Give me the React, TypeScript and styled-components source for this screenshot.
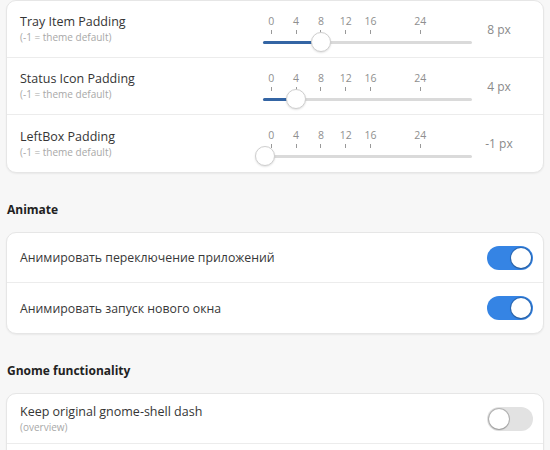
import styled, { createGlobalStyle } from "styled-components";

const GlobalStyle = createGlobalStyle`
  html, body {
    margin: 0;
    padding: 0;
    background: #f7f7f7;
    font-family: "Open Sans", "Noto Sans", sans-serif;
    color: #333;
  }
`;

const Page = styled.div({
  display: "flex",
  flexDirection: "column",
  padding: "0 6px",
  width: 538,
});

const Card = styled.div({
  display: "flex",
  flexDirection: "column",
  background: "#fff",
  border: "1px solid #e6e6e6",
  borderRadius: 10,
  boxShadow: "0 1px 2px rgba(0,0,0,0.06)",
  overflow: "hidden",
});

const Row = styled.div<{ $h: number }>(({ $h }) => ({
  display: "flex",
  alignItems: "center",
  height: $h,
  padding: "0 10px 0 13px",
  borderBottom: "1px solid #ececec",
  boxSizing: "border-box",
  "&:last-child": { borderBottom: "none" },
}));

const Labels = styled.div({
  display: "flex",
  flexDirection: "column",
  flex: 1,
  gap: 1,
  marginTop: -2,
});

const Title = styled.div({
  fontSize: 12.5,
  fontWeight: 500,
  color: "#353535",
  lineHeight: "17px",
});

const Subtitle = styled.div({
  fontSize: 10,
  color: "#a8a8a8",
  lineHeight: "12px",
});

const Label = styled.div({
  flex: 1,
  fontSize: 12.3,
  color: "#383838",
});

const Heading = styled.div({
  fontSize: 12,
  fontWeight: 700,
  color: "#222",
  lineHeight: "16px",
  padding: "29px 1px 14px",
});

const SliderBox = styled.div({
  position: "relative",
  width: 209,
  height: 57,
  alignSelf: "flex-start",
});

const Track = styled.div({
  position: "absolute",
  left: 0,
  right: 0,
  top: 40,
  height: 3,
  borderRadius: 2,
  background: "#dadada",
});

const Fill = styled.div({
  position: "absolute",
  left: 0,
  top: 40,
  height: 3,
  borderRadius: 2,
  background: "#3465a4",
});

const Thumb = styled.div({
  position: "absolute",
  top: 31,
  width: 20,
  height: 20,
  marginLeft: -10,
  borderRadius: "50%",
  background: "#fff",
  border: "1px solid #cfcfcf",
  boxSizing: "border-box",
  boxShadow: "0 1px 2px rgba(0,0,0,0.12)",
});

const Mark = styled.div({
  position: "absolute",
  top: 14,
  width: 20,
  marginLeft: -10,
  display: "flex",
  flexDirection: "column",
  alignItems: "center",
  fontSize: 10.5,
  color: "#8f8f8f",
  lineHeight: "12px",
});

const Tick = styled.div({
  width: 1,
  height: 4,
  marginTop: 3,
  background: "#999",
});

const Value = styled.div({
  width: 54,
  marginRight: 7,
  textAlign: "center",
  fontSize: 12,
  color: "#8a8a8a",
});

const Switch = styled.div<{ $on: boolean }>(({ $on }) => ({
  display: "flex",
  justifyContent: $on ? "flex-end" : "flex-start",
  alignItems: "center",
  width: 46,
  height: 24,
  padding: 2,
  boxSizing: "border-box",
  borderRadius: 12,
  background: $on ? "#3584e4" : "#e2e2e2",
}));

const Knob = styled.div({
  width: 20,
  height: 20,
  borderRadius: "50%",
  background: "#fff",
  boxShadow: "0 0 0 1px rgba(0,0,0,0.2), 0 1px 2px rgba(0,0,0,0.15)",
});

const MIN = -1;
const MAX = 32;
const WIDTH = 209;
const pos = (v: number) => ((v - MIN) / (MAX - MIN)) * (WIDTH - 4) + 2;
const marks = [0, 4, 8, 12, 16, 24];

const Slider = ({ value }: { value: number }) => (
  <SliderBox>
    {marks.map((m) => (
      <Mark key={m} style={{ left: pos(m) }}>
        {m}
        <Tick />
      </Mark>
    ))}
    <Track />
    <Fill style={{ width: pos(value) }} />
    <Thumb style={{ left: pos(value) }} />
  </SliderBox>
);

const paddings = [
  { title: "Tray Item Padding", value: 8 },
  { title: "Status Icon Padding", value: 4 },
  { title: "LeftBox Padding", value: -1 },
];

export default function App() {
  return (
    <>
      <GlobalStyle />
      <Page>
        <Card>
          {paddings.map((p) => (
            <Row $h={57} key={p.title}>
              <Labels>
                <Title>{p.title}</Title>
                <Subtitle>(-1 = theme default)</Subtitle>
              </Labels>
              <Slider value={p.value} />
              <Value>{p.value} px</Value>
            </Row>
          ))}
        </Card>

        <Heading>Animate</Heading>
        <Card>
          <Row $h={50}>
            <Label>Анимировать переключение приложений</Label>
            <Switch $on={true}><Knob /></Switch>
          </Row>
          <Row $h={50}>
            <Label>Анимировать запуск нового окна</Label>
            <Switch $on={true}><Knob /></Switch>
          </Row>
        </Card>

        <Heading>Gnome functionality</Heading>
        <Card>
          <Row $h={50}>
            <Labels>
              <Title>Keep original gnome-shell dash</Title>
              <Subtitle>(overview)</Subtitle>
            </Labels>
            <Switch $on={false}><Knob /></Switch>
          </Row>
          <Row $h={50} />
        </Card>
      </Page>
    </>
  );
}
